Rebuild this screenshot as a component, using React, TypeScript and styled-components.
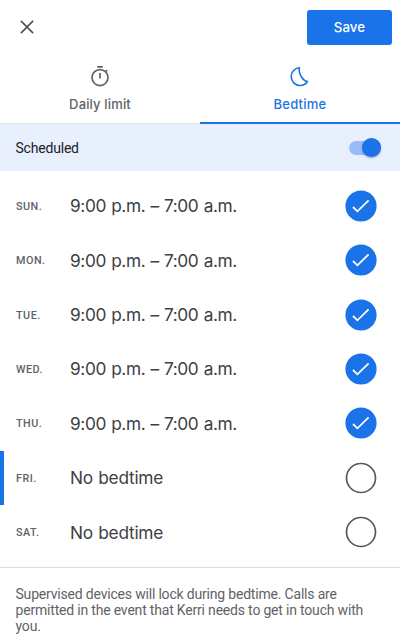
import React, { useState } from "react";
import styled, { createGlobalStyle } from "styled-components";

const GlobalStyle = createGlobalStyle`
  * { box-sizing: border-box; }
  body { margin: 0; background: #fff; }
  button { border: 0; padding: 0; background: none; font: inherit; cursor: pointer; }
`;

const Screen = styled.main`
  display: flex;
  flex-direction: column;
  height: 642px;
  overflow: hidden;
  background: #fff;
  color: #3c4043;
  font-family: Roboto, "Liberation Sans", sans-serif;
`;

const TopBar = styled.header`
  display: flex;
  flex: none;
  justify-content: space-between;
  align-items: center;
  height: 54px;
  padding: 0 8px 0 20px;
`;

const CloseButton = styled.button`
  display: flex;
  color: #4d5156;
`;

const SaveButton = styled.button`
  && {
    width: 85px;
    height: 35px;
    border-radius: 3px;
    background: #1a73e8;
    color: #fff;
    font: 500 13.3px/35px Inter, sans-serif;
    letter-spacing: 0.1px;
  }
`;

const Tabs = styled.nav`
  display: flex;
  flex: none;
  height: 70px;
`;

const Tab = styled.button<{ $active: boolean }>`
  && {
    display: flex;
    flex: 1;
    flex-direction: column;
    align-items: center;
    padding-top: 10px;
    border-bottom: ${(p) => (p.$active ? "2px solid #1a73e8" : "1px solid #dde3ec")};
    color: ${(p) => (p.$active ? "#1a73e8" : "#5f6368")};
    font: 500 13px/16px Inter, sans-serif;
  }
`;

const TabLabel = styled.span<{ $spacing: number }>`
  margin-top: 8px;
  letter-spacing: ${(p) => p.$spacing}px;
`;

const ScheduleBar = styled.section`
  display: flex;
  flex: none;
  align-items: center;
  justify-content: space-between;
  height: 47px;
  padding: 0 19px 0 15.5px;
  background: #e8f0fe;
  color: #202124;
  font-size: 14px;
  letter-spacing: -0.2px;
`;

const SwitchTrack = styled.button<{ $on: boolean }>`
  && {
    display: flex;
    align-items: center;
    justify-content: ${(p) => (p.$on ? "flex-end" : "flex-start")};
    width: 32px;
    height: 14px;
    border-radius: 7px;
    background: ${(p) => (p.$on ? "#97bcf7" : "#bdc1c6")};
  }
`;

const SwitchThumb = styled.span<{ $on: boolean }>`
  flex: none;
  width: 19.5px;
  height: 19.5px;
  border-radius: 50%;
  background: ${(p) => (p.$on ? "#1a73e8" : "#fff")};
  box-shadow: 0 1px 2px rgba(60, 64, 67, 0.45);
`;

const DayList = styled.ul`
  flex: none;
  margin: 0;
  padding: 7.6px 0 8px;
  height: 396px;
  list-style: none;
`;

const DayRow = styled.li<{ $current: boolean }>`
  display: grid;
  grid-template-columns: 54px 1fr 32px;
  align-items: center;
  height: 54.4px;
  padding: 0 23px 0 12px;
  border-left: 4px solid ${(p) => (p.$current ? "#1a73e8" : "transparent")};
`;

const DayName = styled.span`
  padding-top: 1px;
  color: #5f6368;
  font-size: 10.8px;
  font-weight: 500;
  letter-spacing: 0.5px;
`;

const DayTime = styled.span<{ $spacing: number }>`
  padding-top: 1px;
  color: #3c4043;
  font: 400 17.3px/24px Inter, sans-serif;
  letter-spacing: ${(p) => p.$spacing}px;
  word-spacing: 0.8px;
  white-space: nowrap;
`;

const DayToggle = styled.button`
  display: flex;
`;

const Note = styled.footer`
  flex: 1;
  padding: 18px 24px 0 15.5px;
  border-top: 1px solid #dadce0;
  color: #5f6368;
  font-size: 14px;
  letter-spacing: -0.19px;
  line-height: 16px;
`;

const CloseIcon = () => (
  <svg width="14" height="14" viewBox="0 0 14 14" fill="none" stroke="currentColor" strokeWidth="1.6">
    <path d="M.9.9l12.2 12.2M13.1.9L.9 13.1" />
  </svg>
);

const TimerIcon = () => (
  <svg width="22" height="24" viewBox="0 0 22 24" fill="none" stroke="currentColor" strokeWidth="1.7">
    <circle cx="11" cy="13.6" r="8" />
    <path d="M8.2 2.9h5.6M11 9v5.4M16.5 7.7l1.7-1.7" />
  </svg>
);

const MoonIcon = () => (
  <svg width="22" height="24" viewBox="0 0 22 24" fill="none" stroke="currentColor" strokeWidth="1.6" strokeLinejoin="round">
    <path d="M10.3 3.7C5.7 4.1 2.2 7.9 2.2 12.6c0 5 3.9 8.9 8.8 8.9 3.1 0 5.9-1.5 7.5-4C14.8 17.1 9.3 11 10.3 3.7z" />
  </svg>
);

const CheckedIcon = () => (
  <svg width="32" height="32" viewBox="0 0 32 32" fill="none">
    <circle cx="16" cy="16" r="15.6" fill="#1a73e8" />
    <path d="M8 17l4.4 4.3L23.6 10.4" stroke="#fff" strokeWidth="1.8" />
  </svg>
);

const UncheckedIcon = () => (
  <svg width="32" height="32" viewBox="0 0 32 32" fill="none">
    <circle cx="16" cy="16" r="14.5" stroke="#55595e" strokeWidth="1.7" />
  </svg>
);

const initialDays = [
  { name: "SUN.", enabled: true },
  { name: "MON.", enabled: true },
  { name: "TUE.", enabled: true },
  { name: "WED.", enabled: true },
  { name: "THU.", enabled: true },
  { name: "FRI.", enabled: false },
  { name: "SAT.", enabled: false },
];

export default function App() {
  const [tab, setTab] = useState("bedtime");
  const [scheduled, setScheduled] = useState(true);
  const [days, setDays] = useState(initialDays);

  const toggleDay = (name: string) =>
    setDays(days.map((d) => (d.name === name ? { ...d, enabled: !d.enabled } : d)));

  return (
    <Screen>
      <GlobalStyle />
      <TopBar>
        <CloseButton aria-label="Close"><CloseIcon /></CloseButton>
        <SaveButton>Save</SaveButton>
      </TopBar>
      <Tabs>
        <Tab $active={tab === "limit"} onClick={() => setTab("limit")}>
          <TimerIcon />
          <TabLabel $spacing={0.15}>Daily limit</TabLabel>
        </Tab>
        <Tab $active={tab === "bedtime"} onClick={() => setTab("bedtime")}>
          <MoonIcon />
          <TabLabel $spacing={0.25}>Bedtime</TabLabel>
        </Tab>
      </Tabs>
      <ScheduleBar>
        <span>Scheduled</span>
        <SwitchTrack $on={scheduled} role="switch" aria-checked={scheduled} aria-label="Scheduled" onClick={() => setScheduled(!scheduled)}>
          <SwitchThumb $on={scheduled} />
        </SwitchTrack>
      </ScheduleBar>
      <DayList>
        {days.map((d) => (
          <DayRow key={d.name} $current={d.name === "FRI."}>
            <DayName>{d.name}</DayName>
            <DayTime $spacing={d.enabled ? -0.4 : -0.25}>
              {d.enabled ? "9:00 p.m. – 7:00 a.m." : "No bedtime"}
            </DayTime>
            <DayToggle role="checkbox" aria-checked={d.enabled} aria-label={d.name} onClick={() => toggleDay(d.name)}>
              {d.enabled ? <CheckedIcon /> : <UncheckedIcon />}
            </DayToggle>
          </DayRow>
        ))}
      </DayList>
      <Note>
        Supervised devices will lock during bedtime. Calls are permitted in the event that Kerri needs to get in touch with you.
      </Note>
    </Screen>
  );
}
